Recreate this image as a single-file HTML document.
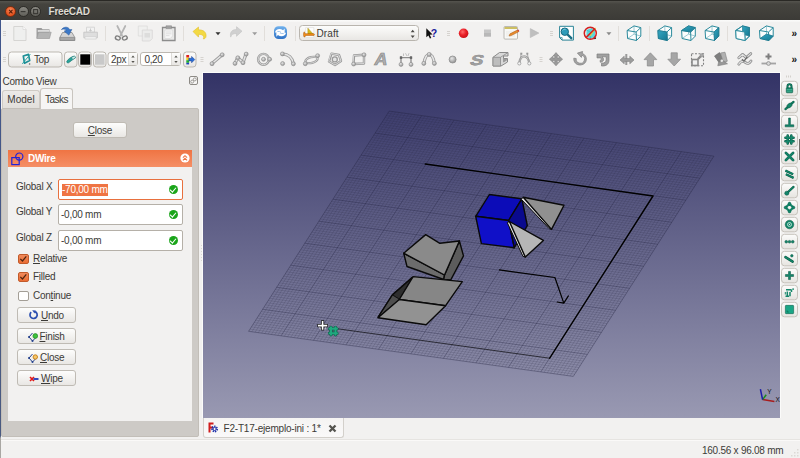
<!DOCTYPE html>
<html><head><meta charset="utf-8"><title>FreeCAD</title>
<style>
*{box-sizing:border-box;margin:0;padding:0}
html,body{width:800px;height:458px;overflow:hidden;background:#f2f1f0;font-family:"Liberation Sans",sans-serif;font-size:10px;letter-spacing:-.25px;line-height:12px;white-space:nowrap;color:#3c3b37}
.abs{position:absolute}
.tx{white-space:nowrap;line-height:12px}
.sel{background:#ef7443;color:#fff;display:inline-block;height:12px;line-height:12px;margin-left:1px}
#title{left:0;top:0;width:800px;height:20px;background:linear-gradient(#55544e 0,#45443f 3px,#3c3b37 100%);border-top:1px solid #2a2925}
#title .t{position:absolute;left:48.5px;top:5px;color:#dfdbd2;font-weight:bold;font-size:10px;letter-spacing:-.2px;text-shadow:0 1px 0 #222}
.wb{position:absolute;top:5px;width:11px;height:11px;border-radius:6px;border:1px solid #2e2d29;background:linear-gradient(#8a8983,#5f5e58)}
#edge{left:0;top:20px;width:1px;height:438px;background:linear-gradient(#41568c 0,#4a5a80 416px,#a9a7a3 418px)}
#view{left:202px;top:72px;width:579px;height:346px;border:1px solid #fbfbfa;border-bottom:0}
.gmin{stroke:#24243c;stroke-opacity:.3;stroke-width:.55;fill:none}
.gmaj{stroke:#20203a;stroke-opacity:.45;stroke-width:.8;fill:none}
/*PANEL*/
.tab{position:absolute;color:#3c3b37;text-align:center}
#tabpane{left:1px;top:108px;width:198px;height:329px;background:#cdcac6;border:1px solid #c2beb8;border-radius:2px}
#tp2{left:8px;top:150px;width:184px;height:271px;background:#f2f1f0}
.btn{position:absolute;border:1px solid #bfbbb4;border-radius:3px;background:linear-gradient(#fdfdfc,#e9e7e4);color:#3c3b37;text-align:center}
.inp{position:absolute;left:58px;width:125px;height:21px;background:#fff;border:1px solid #b5b0a8;border-radius:2px;padding:4px 0 0 2px}
.lbl{position:absolute;left:16px}
.ok{position:absolute;right:4px;top:5px;width:9px;height:9px;border-radius:5px;background:#1aa51a}
.ok:after{content:'';position:absolute;left:2.3px;top:1px;width:2.8px;height:4.8px;border:solid #fff;border-width:0 1.6px 1.6px 0;transform:rotate(40deg);transform-origin:50% 50%}
.cb{position:absolute;left:18px;width:10.5px;height:10px;border:1px solid #a39e96;border-radius:2px;background:#fff}
.cb.on{background:linear-gradient(#f08a5c,#ea6d33);border-color:#c25a2a}
.cbl{position:absolute;left:33px}
u{text-decoration-thickness:1px;text-underline-offset:1px}
</style></head><body>
<div id="title" class="abs">
 <div class="wb" style="left:5.3px;background:radial-gradient(circle at 50% 35%,#f58a5c,#e5511c 70%);border-color:#7b2d10"></div>
 <div class="wb" style="left:17.600px"></div>
 <div class="wb" style="left:30.100px"></div>
 <svg class="abs" style="left:0;top:0" width="48" height="20" viewBox="0 0 48 20"><path d="M9.100 8.900l3.400 3.400M12.500 8.900l-3.400 3.400" stroke="#5a1d08" stroke-width="1.100"/><path d="M20.700 10.600h4.800" stroke="#3a3935" stroke-width="1.200"/><rect x="33.600" y="8.600" width="4" height="4" fill="none" stroke="#3a3935" stroke-width="1.100"/></svg>
 <div class="t">FreeCAD</div>
</div>
<div class="abs" style="left:1px;top:20px;width:799px;height:2px;background:linear-gradient(#fbfbfa,#f6f5f4)"></div>
<div id="edge" class="abs"></div>

<!--TOOLBARS-->
<svg id="tb" class="abs" style="left:0;top:20px" width="800" height="52" viewBox="0 20 800 52">
<defs>
<linearGradient id="gb" x1="0" y1="0" x2="0" y2="1"><stop offset="0" stop-color="#fdfdfc"/><stop offset="1" stop-color="#e8e6e3"/></linearGradient>
<radialGradient id="rec" cx=".4" cy=".35" r=".7"><stop offset="0" stop-color="#ff6a6a"/><stop offset=".5" stop-color="#ea2028"/><stop offset="1" stop-color="#c41018"/></radialGradient>
<radialGradient id="sph" cx=".4" cy=".35" r=".7"><stop offset="0" stop-color="#e8e8e8"/><stop offset="1" stop-color="#8c8c8c"/></radialGradient>
<linearGradient id="teal" x1="0" y1="0" x2="1" y2="1"><stop offset="0" stop-color="#34a8c4"/><stop offset="1" stop-color="#157890"/></linearGradient>
<g id="hd" stroke="#d6d3cf" stroke-width="1"><path d="M0 .5h3M0 2.5h3M0 4.5h3"/></g>
<g id="cube" fill="#fbfdfd" stroke="#2b8a9c" stroke-width="1" stroke-linejoin="round">
<path d="M0.3 5L7.2 0.4L14 2.1L14 10.6L9.7 15L0.8 13Z"/>
<path d="M7.2 0.4L7.3 8.6L0.8 13M7.3 8.6L14 10.6" fill="none" stroke-width=".6" stroke-opacity=".75"/>
<path d="M0.3 5L9.3 6.5L14 2.1M9.3 6.5L9.7 15" fill="none"/>
</g>
<g id="sp"><circle r="2" fill="url(#sph)" stroke="#8e8e8e" stroke-width=".6"/></g>
</defs>
<!-- separators & handles -->
<g stroke="#e1deda" stroke-width="1"><path d="M105.5 26v15M183.5 26v15M264.5 26v15M295.5 26v15M618.5 26v15M649.5 26v15M727.5 26v15"/></g>
<use href="#hd" x="3" y="31"/><use href="#hd" x="3" y="57"/><use href="#hd" x="447" y="31"/><use href="#hd" x="550" y="31"/><use href="#hd" x="200.5" y="57"/><use href="#hd" x="539.5" y="57"/>
<!-- ROW 1 -->
<!-- new -->
<path d="M13.8 26.5h9.2l3 3v11h-12.2z" fill="#efefee" stroke="#d2d1cf" stroke-width=".9"/><path d="M23 26.5v3h3" fill="#fafafa" stroke="#d8d7d5" stroke-width=".7"/>
<!-- open -->
<path d="M36.5 28h5l1 1.2h7v9h-13z" fill="#9c9c9c"/><path d="M37.8 30h11.4v2h-11.4z" fill="#dcdcdc"/><path d="M38.5 32.2h12.7l-1.7 6.3h-12.7z" fill="#b4b4b4" stroke="#9a9a9a" stroke-width=".6"/>
<!-- save -->
<path d="M62.5 32.5h9.5l2.8 5v3h-15v-3z" fill="#d4d4d4" stroke="#8a8a8a" stroke-width=".8"/><path d="M60 37.4h14.6v3h-14.6z" fill="#a8a8a8" stroke="#808080" stroke-width=".6"/>
<path d="M61.5 29.5c2.5-3.2 7-3 8.3.3l2-.3l-3 5.6l-4.6-4l2-.5c-1-1.800-3-1.900-4.700-1.100z" fill="#3a78c8" stroke="#2558a0" stroke-width=".6"/>
<!-- print -->
<path d="M86.500 27.200h8v5h-8z" fill="#f2f2f2" stroke="#cfcfcf" stroke-width=".8"/><path d="M83.800 32.200h13.600v5.600h-13.600z" fill="#dedede" stroke="#c4c4c4" stroke-width=".8"/><path d="M85 36.500h11.200v2.600h-11.200z" fill="#efefef" stroke="#cccccc" stroke-width=".6"/><path d="M90.500 28.500v2.600M89.300 30l1.200 1.300l1.200-1.300" stroke="#c0c0c0" stroke-width=".8" fill="none"/>
<!-- cut -->
<path d="M117.300 26l4.800 9.500M125.300 26l-4.800 9.500" stroke="#b4b4b4" stroke-width="1.700" stroke-linecap="round"/>
<ellipse cx="117.800" cy="38" rx="2.500" ry="1.900" fill="none" stroke="#7e7e7e" stroke-width="1.400" transform="rotate(25 117.800 38)"/><ellipse cx="124.800" cy="38" rx="2.500" ry="1.900" fill="none" stroke="#7e7e7e" stroke-width="1.400" transform="rotate(-25 124.800 38)"/>
<!-- copy -->
<path d="M138.300 26h9v10h-9z" fill="#f0f0ef" stroke="#dddcda" stroke-width=".8"/><path d="M142.300 30h10v8.500l-2.500 2.500h-7.500z" fill="#ececeb" stroke="#d8d7d5" stroke-width=".8"/><path d="M144.500 33h5.500v4.500h-5.500z" fill="#dddddc"/>
<!-- paste -->
<path d="M162.500 27.500h12.500v13h-12.500z" fill="#e9e9e8" stroke="#8c8c8c" stroke-width="1.300"/><path d="M166 25.800h5.500v2.600h-5.500z" fill="#a4a4a4" stroke="#8a8a8a" stroke-width=".6"/><path d="M164.800 30h7.900v6l-2.500 2.500h-5.400z" fill="#f6f6f6" stroke="#cfcfcf" stroke-width=".5"/><path d="M166 32h5.500M166 33.800h5.500M166 35.600h3.500" stroke="#d4d4d4" stroke-width=".7"/>
<!-- undo -->
<path d="M193 31.500l5.500-4.500v2.800c5.500 0 8 2.800 7.500 6.800c-.3 1.600-1.300 2.300-2.800 2.300c1.200-1.600.6-4.600-4.700-4.600v2.800z" fill="#f3d944" stroke="#e2c02a" stroke-width=".6"/>
<path d="M215.500 32.300h5l-2.500 3z" fill="#333"/>
<!-- redo -->
<path d="M242 31.200l-5.500-4.500v2.800c-5 0-6.800 3.200-5.800 7.600c.8-2.600 2.300-3.600 5.800-3.600v2.800z" fill="#d0d0d0" stroke="#c2c2c2" stroke-width=".6"/>
<path d="M252.200 32.300h5l-2.500 3z" fill="#9c9c9c"/>
<!-- refresh -->
<linearGradient id="rf" x1="0" y1="0" x2="0" y2="1"><stop offset="0" stop-color="#6fb0ec"/><stop offset="1" stop-color="#2f72c6"/></linearGradient>
<rect x="274" y="26.200" width="13" height="12.800" rx="4.500" fill="url(#rf)"/>
<g transform="translate(280.500 32.600) scale(1.300) translate(-280.500 -32.600)"><path d="M276.300 32.500c.2-2.600 3.600-3.600 6.200-1.800l1.200-1.200v3.800h-3.800l1.200-1.200c-1.600-.9-3.200-.6-3.600.4z" fill="#fff"/><path d="M284.700 32.700c-.2 2.600-3.600 3.600-6.200 1.800l-1.200 1.200v-3.800h3.800l-1.200 1.200c1.600.9 3.200.6 3.600-.4z" fill="#fff"/></g>
<!-- combo -->
<rect x="299.500" y="25.500" width="119" height="15" rx="3" fill="url(#gb)" stroke="#b9b5ae"/>
<path d="M410.700 32.200l2-2.400l2 2.400zM410.700 35.600l2 2.400l2-2.400z" fill="#4a4945"/>
<path d="M305.600 27.600h8.200v9.700h-8.200z" fill="#fdfdfd" stroke="#d9d7d3" stroke-width=".5"/>
<path d="M307.900 28.200L313 33.900H307.900Z" fill="#e6c81e" stroke="#9c8610" stroke-width=".5"/><path d="M309 30.500v3M310.300 32v1.500" stroke="#9c8610" stroke-width=".4"/>
<path d="M305 33.700h8.900l.6.900l-.6.900h-8.300c-.3 1 -.8 1.500-1.500 1.500c-.8-1.200-.8-4 0-5.200c.6.200.9.900.9 1.900z" fill="#f08c1a" stroke="#aa5808" stroke-width=".5"/>
<!-- whats this -->
<path d="M426.300 28.300v9l2.100-1.900l1.500 3.200l1.400-.7l-1.500-3.100l2.800-.3z" fill="#111"/>
<text x="430.800" y="37.300" font-family="Liberation Sans,sans-serif" font-weight="bold" font-size="10.500" fill="#1a1a9c">?</text>
<!-- record / stop / edit / play -->
<circle cx="463.600" cy="33.300" r="4.800" fill="url(#rec)"/>
<rect x="484" y="29.500" width="7" height="7" fill="#c6c6c6"/><rect x="484" y="33" width="7" height="3.500" fill="#b8b8b8"/>
<rect x="504" y="26.500" width="13.500" height="12.600" rx="1" fill="#f8f8f6" stroke="#b4b2ac" stroke-width=".9"/><path d="M504.500 27h12.500v2h-12.500z" fill="#cdbf62"/><path d="M506 32h9M506 34h9M506 36h9" stroke="#e0dfdc" stroke-width=".6"/>
<path d="M509 36l1-2.200l7.400-3.800l1.200 1.800l-7.400 3.800z" fill="#e88a2c" stroke="#a85a14" stroke-width=".5"/><path d="M517.400 30l1.200 1.800l.8-.5l-1.100-1.800z" fill="#d03030"/>
<path d="M530.300 28.600l8.600 4.500l-8.600 4.500z" fill="#bfbfbf" stroke="#b0b0b0" stroke-width=".5"/>
<!-- zoom fit -->
<path d="M559.600 26.300h13.800v13.800h-11.300l-2.500-2.500z" fill="#fdfefe" stroke="#2a8496" stroke-width="1"/><path d="M559.600 37.600h2.500v2.500" fill="none" stroke="#2a8496" stroke-width=".8"/>
<path d="M567 34l4.300 4.200" stroke="#1a6e84" stroke-width="2.400" stroke-linecap="round"/><circle cx="564.800" cy="31.700" r="3.700" fill="#2e9cba" stroke="#176a80" stroke-width="1"/><path d="M562.600 30.600a2.400 2.400 0 0 1 3-1.300" stroke="#8fd4e6" stroke-width=".8" fill="none"/>
<!-- draw style -->
<path d="M586.500 30l5-2l3.500 2.500v6l-4.500 2.500l-4-2.500z" fill="#5cd6dc"/><path d="M586.500 30l4 2.200l4.500-1.700M590.500 32.200v6.800" stroke="#3ab0ba" stroke-width=".6" fill="none"/>
<path d="M594.200 36.500l2 1.300l-.4 1.200l-2.600.3z" fill="#333"/>
<path d="M589.500 35.500l5.500-8l1 .7l-5.500 8z" fill="#f0d030"/>
<circle cx="590.300" cy="33.300" r="6" fill="none" stroke="#d42020" stroke-width="1.500"/><path d="M594.600 29l-8.600 8.600" stroke="#d42020" stroke-width="1.500"/>
<path d="M606.400 32.300h5l-2.500 3z" fill="#8a8a8a"/>
<!-- cubes -->
<use href="#cube" x="626.8" y="25.5"/>
<use href="#cube" x="657.6" y="25.5"/><path d="M657.9 30.5L666.9 32L667.3 40.5L658.4 38.5Z" fill="url(#teal)" stroke="#1c7288" stroke-width=".6"/>
<use href="#cube" x="681.3" y="25.5"/><path d="M681.6 30.5L688.5 25.9L695.3 27.6L690.6 32Z" fill="url(#teal)" stroke="#1c7288" stroke-width=".6"/>
<use href="#cube" x="704.8" y="25.5"/><path d="M714.1 32L718.8 27.6L718.8 36.1L714.5 40.5Z" fill="url(#teal)" stroke="#1c7288" stroke-width=".6"/>
<use href="#cube" x="735.4" y="25.5"/><path d="M742.6 25.9L749.4 27.6L749.4 36.1L742.7 34.1Z" fill="url(#teal)" stroke="#1c7288" stroke-width=".6"/><path d="M735.7 30.5L744.7 32L745.1 40.5L736.2 38.5Z" fill="#fbfdfd" fill-opacity=".9" stroke="#2b8a9c" stroke-width=".9"/><path d="M735.7 30.5L742.6 25.9M744.7 32L749.4 27.6M745.1 40.5L749.4 36.1" fill="none" stroke="#2b8a9c" stroke-width=".9"/>
<use href="#cube" x="759.2" y="25.5"/><path d="M760 38.5L768.9 40.5L773.2 36.1L766.5 34.1Z" fill="url(#teal)" stroke="#1c7288" stroke-width=".6"/>
<text x="791.500" y="36.800" font-family="Liberation Sans,sans-serif" font-weight="bold" font-size="10" fill="#111">»</text>
<text x="791.500" y="63.200" font-family="Liberation Sans,sans-serif" font-weight="bold" font-size="10" fill="#111">»</text>
<!-- ROW 2 widgets -->
<rect x="8.500" y="52" width="53.500" height="15" rx="3" fill="url(#gb)" stroke="#bcb8b1"/>
<rect x="64.500" y="52" width="12.500" height="15" rx="3" fill="url(#gb)" stroke="#bcb8b1"/>
<rect x="78.500" y="52" width="13" height="15" rx="3" fill="url(#gb)" stroke="#bcb8b1"/><rect x="80.300" y="54.300" width="10" height="10.400" fill="#000"/>
<rect x="93.500" y="52" width="12.500" height="15" rx="3" fill="url(#gb)" stroke="#bcb8b1"/><rect x="95" y="54.300" width="9.500" height="10.400" fill="#c9c9c9"/>
<rect x="108" y="52.500" width="29.500" height="13" rx="2.500" fill="#fff" stroke="#bcb8b1"/><path d="M128.500 53h8.500v12h-8.500z" fill="url(#gb)"/><path d="M128.500 53v12" stroke="#d6d3ce" stroke-width=".8"/>
<rect x="140.500" y="52.500" width="40" height="13" rx="2.500" fill="#fff" stroke="#bcb8b1"/><path d="M171.500 53h8.500v12h-8.500z" fill="url(#gb)"/><path d="M171.500 53v12" stroke="#d6d3ce" stroke-width=".8"/>
<path d="M131.300 57.600l1.700-2l1.700 2zM131.300 61l1.700 2l1.700-2zM174.300 57.600l1.700-2l1.700 2zM174.300 61l1.700 2l1.700-2z" fill="#55544f"/>
<rect x="183.500" y="52" width="12.500" height="15" rx="3" fill="url(#gb)" stroke="#bcb8b1"/>
<!-- top icon -->
<path d="M23.300 56l5.200-1.600l1.200 6.200l-5.200 2.600z" fill="none" stroke="#1e8f96" stroke-width="1.700" stroke-linejoin="round"/><path d="M22.300 63.800l8-9.600" stroke="#2aa6a6" stroke-width="1"/><path d="M29.600 63.300v1.300M28.900 64h1.400" stroke="#444" stroke-width=".6"/>
<!-- pen icon -->
<path d="M66.800 61.300c1.700-2.600 4.200-4.400 7.600-5.300l1.200 1.700c-2.800 1.800-5.200 3.700-7 5.100c-1.100.4-2.200-.4-1.800-1.500z" fill="#2aa39a" stroke="#0f6f6a" stroke-width=".6"/><path d="M71.500 57.500l3.200-1.500l.9 1.500l-2.800 1.900z" fill="#d8f0ee" stroke="#0f6f6a" stroke-width=".4"/>
<!-- color arrow icon -->
<rect x="186.300" y="55" width="2.800" height="2.600" fill="#e02020"/><rect x="186.300" y="57.600" width="2.800" height="2.600" fill="#f0d020"/><rect x="186.300" y="60.200" width="2.800" height="2.600" fill="#20b030"/><rect x="186.300" y="62.800" width="2.800" height="1.600" fill="#2040c0"/>
<path d="M188.800 58.300h2.800v-1.900l3.200 3.200l-3.200 3.200v-1.900h-2.800z" fill="#2a6fd8" stroke="#1a3f90" stroke-width=".5"/>
<!-- ROW 2 gray icons -->
<g fill="none" stroke-linecap="round" stroke-linejoin="round">
 <g stroke="#9c9c9c" stroke-width="3.200">
  <path d="M212 63.500L222 55"/>
  <path d="M235 63.300L237.800 57.800L243 62.600L246 54.100"/>
  <path d="M282.500 53.900C288.500 54.200 292.500 58 293.300 63.600"/>
  <path d="M423.900 63.300C425 57 427 54.500 429.200 54.500C431.400 54.500 433.400 57 434.300 63.300"/>
 </g>
 <g stroke="#e6e6e6" stroke-width="1.500">
  <path d="M212 63.500L222 55"/>
  <path d="M235 63.300L237.800 57.800L243 62.600L246 54.100"/>
  <path d="M282.500 53.900C288.500 54.200 292.500 58 293.300 63.600"/>
  <path d="M423.900 63.300C425 57 427 54.500 429.200 54.500C431.400 54.500 433.400 57 434.300 63.300"/>
 </g>
 <!-- circle -->
 <circle cx="263.500" cy="59.300" r="5.400" stroke="#9a9a9a" stroke-width="2.400"/><circle cx="263.500" cy="59.300" r="5.400" stroke="#dcdcdc" stroke-width=".9"/>
 <!-- ellipse -->
 <ellipse cx="311.500" cy="60" rx="6.300" ry="2.900" transform="rotate(-14 311.500 60)" stroke="#9a9a9a" stroke-width="2.200"/><ellipse cx="311.500" cy="60" rx="6.300" ry="2.900" transform="rotate(-14 311.500 60)" stroke="#dcdcdc" stroke-width=".8"/>
 <!-- polygon -->
 <path d="M331.500 53.600L339 55L341 61L335 65L329 61.500Z" stroke="#9a9a9a" stroke-width="2.400"/><path d="M331.500 53.600L339 55L341 61L335 65L329 61.500Z" stroke="#dcdcdc" stroke-width=".9"/>
 <circle cx="334.800" cy="59.400" r="2.500" stroke="#9a9a9a" stroke-width="1.300" fill="#e4e4e4"/>
 <!-- rect -->
 <path d="M354 55.500L364 54.800L364 63.500L353.500 64Z" stroke="#9a9a9a" stroke-width="2.400"/><path d="M354 55.500L364 54.800L364 63.500L353.500 64Z" stroke="#dcdcdc" stroke-width=".9"/>
</g>
<g>
<use href="#sp" x="212" y="63.700"/><use href="#sp" x="222.200" y="54.800"/>
<use href="#sp" x="235" y="63.400"/><use href="#sp" x="237.800" y="57.800"/><use href="#sp" x="243" y="62.700"/><use href="#sp" x="246.200" y="54.100"/>
<use href="#sp" x="263.500" y="59.300"/><use href="#sp" x="269.600" y="59.300"/>
<use href="#sp" x="282.400" y="53.900"/><use href="#sp" x="293.400" y="63.800"/><use href="#sp" x="282.600" y="63.600"/>
<use href="#sp" x="317.600" y="55.700"/><use href="#sp" x="305.300" y="63.700"/>
<use href="#sp" x="364" y="54.800"/><use href="#sp" x="353.600" y="64"/>
<use href="#sp" x="423.800" y="63.400"/><use href="#sp" x="434.400" y="63.400"/><use href="#sp" x="429.200" y="54.400"/>
</g>
<!-- text A -->
<text transform="translate(374.500 65.300) scale(1.120 1)" font-family="Liberation Sans,sans-serif" font-style="italic" font-weight="bold" font-size="16" fill="#b0b0b0" stroke="#868686" stroke-width=".6">A</text>
<!-- dimension -->
<path d="M401 56v8M411 56v8" stroke="#8a8a8a" stroke-width="1.300"/><path d="M400 57.700h12" stroke="#777" stroke-width="1"/><path d="M403.500 53.500v2.500M405.500 53.200l1.500 2.800M409 53.200l-1 2.800" stroke="#a0a0a0" stroke-width=".6"/>
<use href="#sp" x="401" y="64.400"/><use href="#sp" x="411" y="64.400"/><rect x="399.800" y="56.500" width="2.400" height="2.400" fill="#666"/><rect x="409.800" y="56.500" width="2.400" height="2.400" fill="#666"/>
<!-- point -->
<circle cx="452.600" cy="59.500" r="3.500" fill="url(#sph)" stroke="#8e8e8e" stroke-width=".8"/>
<!-- S -->
<text transform="translate(469 65) scale(1.350 1) skewX(-14)" font-family="Liberation Sans,sans-serif" font-weight="bold" font-size="14.500" fill="#a2a2a2" stroke="#8a8a8a" stroke-width=".5">S</text>
<!-- facebinder -->
<path d="M493 57.300L499.500 52.500L508 52.500L508 56L503.500 56L503.500 58.500L507.500 58.500L507.500 62L501 66L493 66Z" fill="#d8d8d8" stroke="#8a8a8a" stroke-width="1" stroke-linejoin="round"/><path d="M493 57.300L500.500 57.300L500.500 66L493 66Z" fill="#bdbdbd" stroke="#8a8a8a" stroke-width=".8"/><path d="M500.500 57.300L508 52.500" stroke="#8a8a8a" stroke-width=".8"/><path d="M503.500 58.500v3.500l4-2.500" fill="#9c9c9c" stroke="#8a8a8a" stroke-width=".6"/>
<!-- bezier -->
<path d="M519.300 63.300C520.300 54 528 54 529.300 63.300" fill="none" stroke="#9a9a9a" stroke-width="2.200"/><path d="M519.300 63.300C520.300 54 528 54 529.300 63.300" fill="none" stroke="#dcdcdc" stroke-width=".8"/>
<path d="M519.300 63.300L521.300 53.500M529.300 63.300L527.300 53.500" stroke="#9a9a9a" stroke-width=".8"/>
<circle cx="519.300" cy="63.400" r="1.600" fill="#f4f4f4" stroke="#9a9a9a" stroke-width=".8"/><circle cx="529.300" cy="63.400" r="1.600" fill="#f4f4f4" stroke="#9a9a9a" stroke-width=".8"/><rect x="520.300" y="52.700" width="2" height="2" fill="#999"/><rect x="526.300" y="52.700" width="2" height="2" fill="#999"/>
<!-- move -->
<path d="M556 52.600l3 3.400h-1.800v2h2v-1.800l3.400 3l-3.400 3v-1.800h-2v2h1.800l-3 3.400l-3-3.400h1.800v-2h-2v1.800l-3.400-3l3.400-3v1.800h2v-2h-1.800z" fill="#9a9a9a" stroke="#808080" stroke-width=".6"/>
<!-- rotate -->
<path d="M576.200 58.500a4.200 4.200 0 1 0 5.600-3.400l-.4 2.300l-4-4.300l5.200-1.600l-.4 1.900c6 2 5.600 11-1.600 11.600c-4.400.2-7.200-3-6.800-6.800z" fill="#a4a4a4" stroke="#7e7e7e" stroke-width=".7"/>
<!-- offset -->
<path d="M597 54h12v6c0 4-2.500 6-6.500 6h-1v-2.800c3 0 4.700-1 4.700-3.700v-2.700h-4.200c2.600 1.600 2 5.600-1.800 5.400v-2c1.800 0 1.600-2.300-.4-2.300h-2.800z" fill="#a0a0a0" stroke="#7e7e7e" stroke-width=".7"/>
<!-- trimex -->
<path d="M626.300 54v11" stroke="#9a9a9a" stroke-width="2"/><path d="M620 60l4.200-3.800v2.400h5.600v-2.400l4.200 3.800l-4.200 3.800v-2.400h-5.600v2.400z" fill="#9c9c9c" stroke="#808080" stroke-width=".6"/>
<!-- upgrade / downgrade -->
<path d="M650.400 52.800l6.400 6.800h-3.300v6.400h-6.200v-6.400h-3.300z" fill="#a6a6a6" stroke="#8a8a8a" stroke-width=".7"/>
<path d="M674.200 66l6.400-6.800h-3.300v-6.400h-6.200v6.400h-3.300z" fill="#a6a6a6" stroke="#8a8a8a" stroke-width=".7"/>
<!-- scale -->
<rect x="691.500" y="53.800" width="12" height="12" fill="none" stroke="#808080" stroke-width="1.100" stroke-dasharray="2 1.500"/><rect x="692" y="59.500" width="6" height="6" fill="#f0f0f0" stroke="#8a8a8a" stroke-width="1.600"/><path d="M698.500 58.500l3-3" stroke="#8a8a8a" stroke-width="2.400" stroke-linecap="round"/><circle cx="701.800" cy="55.300" r="1.700" fill="#aaa" stroke="#888" stroke-width=".5"/>
<!-- edit -->
<path d="M714.500 56l5-3.400l4 7l-4.600 2.800z" fill="#7e7e7e" stroke="#6a6a6a" stroke-width=".6"/><path d="M720.500 53l4.500-.8l2.300 9l-4 1.500z" fill="#b0b0b0" stroke="#7e7e7e" stroke-width=".6"/><path d="M718.500 62.300l4.700-1.500l4.300 3l-9.700 2z" fill="#989898" stroke="#7e7e7e" stroke-width=".6"/><circle cx="721.800" cy="60.800" r="1.300" fill="#e8e8e8"/>
<!-- wire to bspline -->
<path d="M738.800 57.800l3.800-3.400l3.600 3.200l4.600-4" fill="none" stroke="#8e8e8e" stroke-width="2.800" stroke-linecap="round" stroke-linejoin="round"/><path d="M738.800 57.800l3.800-3.400l3.600 3.200l4.600-4" fill="none" stroke="#e2e2e2" stroke-width="1.200" stroke-linecap="round" stroke-linejoin="round"/>
<path d="M738.800 64.200c2.600-3.800 5-3 6.800-1.600c1.800 1.400 3.600 1 5.400-1.600" fill="none" stroke="#8e8e8e" stroke-width="2.800" stroke-linecap="round"/><path d="M738.800 64.200c2.600-3.800 5-3 6.800-1.600c1.800 1.400 3.600 1 5.400-1.600" fill="none" stroke="#e2e2e2" stroke-width="1.200" stroke-linecap="round"/>
<path d="M742 59.200l2 2l3.400-4.600" fill="none" stroke="#6e6e6e" stroke-width="1.400"/>
<!-- add point -->
<path d="M768.500 53.500v6M765.500 56.500h6" stroke="#7e7e7e" stroke-width="2"/><path d="M761.500 63.500h14.500" stroke="#a4a4a4" stroke-width="1.800"/><circle cx="768.500" cy="63.500" r="1.900" fill="#d8d8d8" stroke="#8a8a8a" stroke-width=".8"/>

</svg>
<div class="abs" style="left:316.500px;top:28px;font-size:10px;letter-spacing:.1px">Draft</div>
<div class="abs" style="left:34px;top:54px;letter-spacing:-.45px">Top</div>
<div class="abs" style="left:111px;top:53.500px">2px</div>
<div class="abs" style="left:144.500px;top:53.500px;letter-spacing:-.4px">0,20</div>


<!--VIEW-->
<div id="view" class="abs"><svg width="577" height="345" viewBox="203 73 577 345" style="display:block">
<defs><linearGradient id="bg" x1="0" y1="0" x2="0" y2="1"><stop offset="0" stop-color="#333366"/><stop offset="1" stop-color="#9999b2"/></linearGradient></defs>
<rect x="203" y="73" width="577" height="345" fill="url(#bg)"/>
<path class="gmin" d="M392.4 111.6L251.8 331.8M387.8 113.3L712.5 158.4M395.7 112.0L255.1 332.2M386.4 115.5L711.1 160.6M398.9 112.5L258.3 332.7M385.0 117.7L709.7 162.8M402.2 112.9L261.6 333.1M383.6 119.9L708.3 165.0M405.4 113.4L264.8 333.6M382.2 122.1L706.9 167.2M408.7 113.8L268.1 334.0M380.8 124.3L705.5 169.4M411.9 114.3L271.3 334.5M379.4 126.5L704.1 171.6M415.2 114.7L274.6 334.9M378.0 128.7L702.7 173.8M418.4 115.2L277.8 335.4M376.5 130.9L701.2 176.0M424.9 116.1L284.3 336.3M373.7 135.3L698.4 180.4M428.2 116.5L287.6 336.7M372.3 137.5L697.0 182.6M431.4 117.0L290.8 337.2M370.9 139.7L695.6 184.8M434.7 117.4L294.1 337.6M369.5 141.9L694.2 187.0M437.9 117.9L297.3 338.1M368.1 144.1L692.8 189.2M441.2 118.3L300.6 338.5M366.7 146.3L691.4 191.4M444.4 118.8L303.8 339.0M365.3 148.5L690.0 193.6M447.6 119.2L307.0 339.4M363.9 150.7L688.6 195.8M450.9 119.7L310.3 339.9M362.5 152.9L687.2 198.0M457.4 120.6L316.8 340.8M359.7 157.3L684.4 202.4M460.6 121.0L320.0 341.2M358.3 159.5L683.0 204.6M463.9 121.5L323.3 341.7M356.9 161.7L681.6 206.8M467.1 121.9L326.5 342.1M355.5 163.9L680.2 209.0M470.4 122.4L329.8 342.6M354.1 166.1L678.8 211.2M473.6 122.8L333.0 343.0M352.6 168.4L677.3 213.5M476.9 123.3L336.3 343.5M351.2 170.6L675.9 215.7M480.1 123.7L339.5 343.9M349.8 172.8L674.5 217.9M483.4 124.2L342.8 344.4M348.4 175.0L673.1 220.1M489.9 125.1L349.3 345.3M345.6 179.4L670.3 224.5M493.1 125.5L352.5 345.7M344.2 181.6L668.9 226.7M496.4 126.0L355.8 346.2M342.8 183.8L667.5 228.9M499.6 126.4L359.0 346.6M341.4 186.0L666.1 231.1M502.8 126.9L362.2 347.1M340.0 188.2L664.7 233.3M506.1 127.3L365.5 347.5M338.6 190.4L663.3 235.5M509.3 127.8L368.7 348.0M337.2 192.6L661.9 237.7M512.6 128.2L372.0 348.4M335.8 194.8L660.5 239.9M515.8 128.7L375.2 348.9M334.4 197.0L659.1 242.1M522.3 129.6L381.7 349.8M331.6 201.4L656.3 246.5M525.6 130.0L385.0 350.2M330.1 203.6L654.8 248.7M528.8 130.5L388.2 350.7M328.7 205.8L653.4 250.9M532.1 130.9L391.5 351.1M327.3 208.0L652.0 253.1M535.3 131.4L394.7 351.6M325.9 210.2L650.6 255.3M538.6 131.8L398.0 352.0M324.5 212.4L649.2 257.5M541.8 132.3L401.2 352.5M323.1 214.6L647.8 259.7M545.1 132.7L404.5 352.9M321.7 216.8L646.4 261.9M548.3 133.2L407.7 353.4M320.3 219.0L645.0 264.1M554.8 134.1L414.2 354.3M317.5 223.4L642.2 268.5M558.0 134.6L417.4 354.8M316.1 225.6L640.8 270.7M561.3 135.0L420.7 355.2M314.7 227.8L639.4 272.9M564.5 135.5L423.9 355.7M313.3 230.0L638.0 275.1M567.8 135.9L427.2 356.1M311.9 232.2L636.6 277.3M571.0 136.4L430.4 356.6M310.5 234.4L635.2 279.5M574.3 136.8L433.7 357.0M309.1 236.6L633.8 281.7M577.5 137.3L436.9 357.5M307.7 238.8L632.4 283.9M580.8 137.7L440.2 357.9M306.2 241.0L630.9 286.1M587.3 138.6L446.7 358.8M303.4 245.4L628.1 290.5M590.5 139.1L449.9 359.3M302.0 247.6L626.7 292.7M593.8 139.5L453.2 359.7M300.6 249.8L625.3 294.9M597.0 140.0L456.4 360.2M299.2 252.0L623.9 297.1M600.3 140.4L459.7 360.6M297.8 254.2L622.5 299.3M603.5 140.9L462.9 361.1M296.4 256.4L621.1 301.5M606.7 141.3L466.1 361.5M295.0 258.6L619.7 303.7M610.0 141.8L469.4 362.0M293.6 260.8L618.3 305.9M613.2 142.2L472.6 362.4M292.2 263.0L616.9 308.1M619.7 143.1L479.1 363.3M289.4 267.4L614.1 312.5M623.0 143.6L482.4 363.8M288.0 269.6L612.7 314.7M626.2 144.0L485.6 364.2M286.6 271.8L611.3 316.9M629.5 144.5L488.9 364.7M285.2 274.0L609.9 319.1M632.7 144.9L492.1 365.1M283.8 276.2L608.4 321.4M636.0 145.4L495.4 365.6M282.3 278.5L607.0 323.6M639.2 145.8L498.6 366.0M280.9 280.7L605.6 325.8M642.5 146.3L501.9 366.5M279.5 282.9L604.2 328.0M645.7 146.7L505.1 366.9M278.1 285.1L602.8 330.2M652.2 147.6L511.6 367.8M275.3 289.5L600.0 334.6M655.5 148.1L514.9 368.3M273.9 291.7L598.6 336.8M658.7 148.5L518.1 368.7M272.5 293.9L597.2 339.0M661.9 149.0L521.3 369.2M271.1 296.1L595.8 341.2M665.2 149.4L524.6 369.6M269.7 298.3L594.4 343.4M668.4 149.9L527.8 370.1M268.3 300.5L593.0 345.6M671.7 150.3L531.1 370.5M266.9 302.7L591.6 347.8M674.9 150.8L534.3 371.0M265.5 304.9L590.2 350.0M678.2 151.2L537.6 371.4M264.1 307.1L588.8 352.2M684.7 152.1L544.1 372.3M261.3 311.5L586.0 356.6M687.9 152.6L547.3 372.8M259.8 313.7L584.5 358.8M691.2 153.0L550.6 373.2M258.4 315.9L583.1 361.0M694.4 153.5L553.8 373.7M257.0 318.1L581.7 363.2M697.7 153.9L557.1 374.1M255.6 320.3L580.3 365.4M700.9 154.4L560.3 374.6M254.2 322.5L578.9 367.6M704.2 154.8L563.6 375.0M252.8 324.7L577.5 369.8M707.4 155.3L566.8 375.5M251.4 326.9L576.1 372.0M710.7 155.7L570.1 375.9M250.0 329.1L574.7 374.2"/>
<path class="gmaj" d="M389.2 111.1L248.6 331.3M389.2 111.1L713.9 156.2M421.7 115.6L281.1 335.8M375.1 133.1L699.8 178.2M454.1 120.1L313.5 340.3M361.1 155.1L685.8 200.2M486.6 124.6L346.0 344.8M347.0 177.2L671.7 222.3M519.1 129.1L378.5 349.3M333.0 199.2L657.7 244.3M551.5 133.6L410.9 353.8M318.9 221.2L643.6 266.3M584.0 138.2L443.4 358.4M304.8 243.2L629.5 288.3M616.5 142.7L475.9 362.9M290.8 265.2L615.5 310.3M649.0 147.2L508.4 367.4M276.7 287.3L601.4 332.4M681.4 151.7L540.8 371.9M262.7 309.3L587.4 354.4M713.9 156.2L573.3 376.4M248.6 331.3L573.3 376.4"/>

<g stroke="#000" stroke-linejoin="round" stroke-linecap="round" fill="none">
<!-- wire -->
<path d="M425.2 164L653 196L549.7 358.2" stroke-width="1.4"/>
<path d="M549.7 358.2L338 328.800" stroke-width=".75" stroke-opacity=".85"/>
<path d="M499.4 269.9L554.9 277.5L563.8 303.1M568.4 295.9L563.8 303.1L557.2 302" stroke-width="1.2"/>
</g>
<g stroke="#0a0a0a" stroke-width="1.400" stroke-linejoin="round">
<!-- cube -->
<path d="M489.4 194.5L521.9 198.8L508.6 220.5L475.7 216.3Z" fill="#0c0cb8"/>
<path d="M475.7 216.3L508.6 220.5L514.3 247.7L481.4 243.6Z" fill="#1010c8"/>
<path d="M508.6 220.5L521.9 198.8L527.3 225.5L514.3 247.7Z" fill="#0a0a8e"/>
<!-- upper triangle -->
<path d="M521.300 199.300L523.400 197L551.700 229.500L549.200 228.600Z" fill="#e0e0e0" stroke-width="1"/>
<path d="M523.2 197.2L564 205.3L551.5 229.4Z" fill="#909090"/>
<!-- lower triangle -->
<path d="M507.300 222.700L509.600 221.400L525.500 257.200L523 256.400Z" fill="#e4e4e4" stroke-width="1"/>
<path d="M509.4 221.5L543.4 240.4L525.3 257.1Z" fill="#b6b6b6"/>
<!-- upper gray wedge -->
<path d="M403.7 253.2L444.5 275L443.8 279.5L407 266.5Z" fill="#6c6c6c"/>
<path d="M444.5 275L459.4 241L463.5 255.9L450.7 280L443.8 279.5Z" fill="#5c5c5c"/>
<path d="M403.7 253.2L425.7 234.6L439.9 243.3L459.4 241L444.5 275Z" fill="#8a8a8a"/>
<!-- lower folded sheet -->
<path d="M412.6 277.1L392.3 294.9L399.5 299.3Z" fill="#2e2e2e" stroke-width=".8"/>
<path d="M392.3 294.9L377.9 317.4L399.5 299.3Z" fill="#4e4e4e" stroke-width=".8"/>
<path d="M412.6 277.1L392.3 294.9L377.9 317.4" fill="none"/>
<path d="M413.1 276.6L462.3 281.6L445.6 305.7L399.3 299.5Z" fill="#868686"/>
<path d="M399.3 299.5L445.6 305.7L426.1 324.7L378 317.8Z" fill="#929292"/>
</g>
<!-- cursor -->
<g>
<path d="M329.500 328.800h7.500M329.500 333.200h7.500M331 327.300v7.500M335.500 327.300v7.500" stroke="#0e5c48" stroke-width="3.200" stroke-linecap="round" fill="none"/>
<path d="M329.500 328.800h7.500M329.500 333.200h7.500M331 327.300v7.500M335.500 327.300v7.500" stroke="#20a87e" stroke-width="2.100" stroke-linecap="round" fill="none"/>
<path d="M322.600 320.300v10.200M317.300 325.600h10.600" stroke="#1c1c1c" stroke-width="3.200"/>
<path d="M322.600 321v8.800M318 325.600h9.200" stroke="#fff" stroke-width="1.600"/>
<path d="M319.500 327.500l1 2M325.500 327.500l-.6 2" stroke="#e8e8e8" stroke-width=".8"/>
</g>
<!-- axis -->
<g stroke-width="1.500" fill="none">
<path d="M762.600 399.600L774.400 401.600" stroke="#a81c1c"/>
<path d="M762.600 399.600L766.200 394.700" stroke="#1c8a1c"/>
<path d="M762.600 399.600L760.400 389.200" stroke="#1c1ca8"/>
</g>
<text x="767.300" y="394.300" font-family="Liberation Sans,sans-serif" font-size="6.500" fill="#111">Y</text>
<text x="775.500" y="402.300" font-family="Liberation Sans,sans-serif" font-size="6.500" fill="#111">X</text>

</svg></div>

<div class="abs tx" style="left:2.500px;top:76px">Combo View</div>
<svg class="abs" style="left:189px;top:76px" width="9" height="9" viewBox="0 0 9 9"><rect x=".5" y=".5" width="8" height="8" rx="1.5" fill="#f7f6f5" stroke="#8d8a85"/><circle cx="3.2" cy="5.6" r="1.5" fill="none" stroke="#8d8a85" stroke-width=".8"/><circle cx="5.8" cy="3.4" r="1.5" fill="none" stroke="#8d8a85" stroke-width=".8"/></svg>
<div id="tabpane" class="abs"></div>
<div class="abs tab" style="left:2px;top:90px;width:38px;height:18px;background:linear-gradient(#eceae7,#e2dfdb);border:1px solid #cfcbc5;border-bottom:0;border-radius:3px 3px 0 0;padding-top:3px;letter-spacing:.05px">Model</div>
<div class="abs tab" style="left:40px;top:88px;width:33px;height:21px;background:#f6f5f4;border:1px solid #c9c5bf;border-bottom:0;border-radius:3px 3px 0 0;padding-top:4.500px;letter-spacing:-.5px">Tasks</div>
<div class="btn" style="left:73px;top:122px;width:54px;height:16px;padding-top:1.500px"><u>C</u>lose</div>
<div id="tp2" class="abs"></div>
<div class="abs" style="left:8px;top:150px;width:184px;height:17px;background:linear-gradient(#ef7443,#f58f66)"></div>
<svg class="abs" style="left:10px;top:151px" width="16" height="16" viewBox="0 0 16 16"><circle cx="9.3" cy="5.6" r="3.6" fill="none" stroke="#2222d8" stroke-width="1.2"/><rect x="1.8" y="6.6" width="7.4" height="7" fill="none" stroke="#2222d8" stroke-width="1.2"/></svg>
<div class="abs tx" style="left:28px;top:153px;color:#fff;font-weight:bold">DWire</div>
<svg class="abs" style="left:180px;top:153px" width="10" height="10" viewBox="0 0 10 10"><circle cx="5" cy="5" r="4.6" fill="#fff"/><path d="M2.9 4.7L5 2.7L7.1 4.7M2.9 7.3L5 5.3L7.1 7.3" fill="none" stroke="#ef7443" stroke-width="1.1"/></svg>

<div class="lbl tx" style="top:181px">Global X</div>
<div class="inp" style="top:179px;border-color:#e8703e"><span class="sel">-70,00 mm</span><i class="ok"></i></div>
<div class="lbl tx" style="top:206px">Global Y</div>
<div class="inp" style="top:204px">-0,00 mm<i class="ok"></i></div>
<div class="lbl tx" style="top:232px">Global Z</div>
<div class="inp" style="top:230px">-0,00 mm<i class="ok"></i></div>

<div class="cb on" style="top:254px"></div><div class="cbl tx" style="top:253px"><u>R</u>elative</div>
<div class="cb on" style="top:272px"></div><div class="cbl tx" style="top:271px">F<u>i</u>lled</div>
<div class="cb" style="top:291px"></div><div class="cbl tx" style="top:290px">Con<u>t</u>inue</div>
<svg class="abs" style="left:18px;top:254px" width="11" height="30" viewBox="0 0 11 30"><path d="M2.300 4.800l2.200 2.200L8.300 2.400M2.300 22.800l2.200 2.200L8.300 20.400" fill="none" stroke="#4e2410" stroke-width="1.200"/></svg>

<div class="btn" style="left:17px;top:307px;width:59px;height:16px"></div>
<div class="btn" style="left:17px;top:328px;width:59px;height:16px"></div>
<div class="btn" style="left:17px;top:349px;width:59px;height:16px"></div>
<div class="btn" style="left:17px;top:370px;width:59px;height:16px"></div>
<div class="abs tx" style="left:41px;top:310px"><u>U</u>ndo</div>
<div class="abs tx" style="left:39.5px;top:331px"><u>F</u>inish</div>
<div class="abs tx" style="left:40px;top:352px"><u>C</u>lose</div>
<div class="abs tx" style="left:41px;top:373px"><u>W</u>ipe</div>
<svg class="abs" style="left:26px;top:308px" width="14" height="80" viewBox="26 307 14 80">
<path d="M31.2 311.2a3.6 3.6 0 1 0 3.8-.6" fill="none" stroke="#2c4fb0" stroke-width="1.7"/><path d="M32.2 309.2l3.6.4-1.3 3z" fill="#2c4fb0"/>
<path d="M32.5 332l-3.5 4l3.5 4l3.5-3.6" fill="none" stroke="#23408c" stroke-width="1"/><circle cx="35.3" cy="335" r="2.4" fill="#3cc23c" stroke="#1b7a1b" stroke-width=".6"/><circle cx="29" cy="336" r="1" fill="#23408c"/><circle cx="32.5" cy="340" r="1" fill="#23408c"/>
<path d="M32.5 353l-3.5 4l3.5 4l3.5-3.6" fill="none" stroke="#23408c" stroke-width="1"/><circle cx="35.3" cy="356" r="2.2" fill="#f5c76a" stroke="#c47a12" stroke-width=".9"/><circle cx="29" cy="357" r="1" fill="#23408c"/><circle cx="32.5" cy="361" r="1" fill="#23408c"/>
<path d="M30 376l4 4M34 376l-4 4" stroke="#e01818" stroke-width="1.6"/><path d="M33.5 378h5" stroke="#2036b8" stroke-width="1.8"/>
</svg>

<div class="abs" style="left:203px;top:418px;width:141px;height:20px;background:linear-gradient(#f5f4f3,#faf9f9);border:1px solid #d3d0cb;border-top:0;border-radius:0 0 3px 3px"></div>
<svg class="abs" style="left:207px;top:421px" width="12" height="13" viewBox="0 0 12 13"><path d="M1.5 1.5h5v2h-3v2h2.5v2h-2.5v4h-2z" fill="#d01c1c"/><circle cx="7.6" cy="8" r="2.6" fill="none" stroke="#1c2fa8" stroke-width="1.6" stroke-dasharray="1.4 .9"/><circle cx="7.6" cy="8" r="1.6" fill="none" stroke="#1c2fa8" stroke-width="1"/></svg>
<div class="abs tx" style="left:223.5px;top:423px;letter-spacing:-.2px">F2-T17-ejemplo-ini : 1*</div>
<svg class="abs" style="left:328px;top:424px" width="9" height="9" viewBox="0 0 9 9"><path d="M1.5 1.5l6 6M7.5 1.5l-6 6" stroke="#55544f" stroke-width="2.3"/></svg>
<div class="abs" style="left:1px;top:440px;width:799px;height:1px;background:#faf9f8"></div><div class="abs" style="left:1px;top:439px;width:799px;height:1px;background:#e6e4e1"></div>
<div class="abs tx" style="left:702px;top:444.500px">160.56 x 96.08 mm</div>
<svg class="abs" style="left:788px;top:446px" width="12" height="12" viewBox="0 0 12 12"><!--grip--><g fill="#dcd9d5"><rect x="9" y="3" width="1.500" height="1.500"/><rect x="6" y="6" width="1.500" height="1.500"/><rect x="9" y="6" width="1.500" height="1.500"/><rect x="3" y="9" width="1.500" height="1.500"/><rect x="6" y="9" width="1.500" height="1.500"/><rect x="9" y="9" width="1.500" height="1.500"/></g></svg>
<svg class="abs" style="left:200px;top:244px" width="3" height="20" viewBox="0 0 3 20"><!--splitter--><g fill="#d9d6d2"><rect x="1" y="1" width="1" height="1"/><rect x="1" y="4" width="1" height="1"/><rect x="1" y="7" width="1" height="1"/><rect x="1" y="10" width="1" height="1"/><rect x="1" y="13" width="1" height="1"/><rect x="1" y="16" width="1" height="1"/></g></svg>

<svg class="abs" style="left:780px;top:72px" width="20" height="250" viewBox="780 72 20 250">
<defs><linearGradient id="sb" x1="0" y1="0" x2="0" y2="1"><stop offset="0" stop-color="#fcfcfb"/><stop offset="1" stop-color="#e6e4e0"/></linearGradient></defs>
<path d="M786.500 75.500v2M788.500 75.500v2M790.500 75.500v2" stroke="#d4d1cc" stroke-width="1"/>
<rect x="781.500" y="81.3" width="16" height="14.500" rx="3" fill="url(#sb)" stroke="#c6c2bb"/><g transform="translate(789.5 88.5) scale(.9) translate(-789.5 -88.5)"><path d="M787.3 88.0v-2a2.200 2.200 0 0 1 4.400 0v2" fill="none" stroke="#0a5a44" stroke-width="2.200"/><path d="M787.3 88.0v-2a2.200 2.200 0 0 1 4.400 0v2" fill="none" stroke="#14866a" stroke-width="1.100"/><rect x="785.9" y="87.7" width="7.200" height="5.600" rx=".8" fill="#14866a" stroke="#0a5a44" stroke-width=".6"/><path d="M786.5 89.7h6M786.5 91.5h6" stroke="#7fe0c0" stroke-width=".5"/></g>
<rect x="781.500" y="98.3" width="16" height="14.500" rx="3" fill="url(#sb)" stroke="#c6c2bb"/><g transform="translate(789.5 105.5) scale(.9) translate(-789.5 -105.5)"><path d="M785.0 109.5L794.0 101.5" stroke="#0a5a44" stroke-width="2.400" stroke-linecap="round"/><path d="M785.0 109.5L794.0 101.5" stroke="#14866a" stroke-width="1.300" stroke-linecap="round"/><ellipse cx="789.5" cy="105.5" rx="3.200" ry="2.200" transform="rotate(-40 789.5 105.5)" fill="#14866a" stroke="#0a5a44" stroke-width=".6"/></g>
<rect x="781.500" y="115.3" width="16" height="14.500" rx="3" fill="url(#sb)" stroke="#c6c2bb"/><g transform="translate(789.5 122.5) scale(.9) translate(-789.5 -122.5)"><path d="M788.5 117.5h2v7.600h3.800v2.200h-9.600v-2.200h3.800z" fill="#14866a" stroke="#0a5a44" stroke-width=".6"/></g>
<rect x="781.500" y="132.3" width="16" height="14.500" rx="3" fill="url(#sb)" stroke="#c6c2bb"/><g transform="translate(789.5 139.5) scale(.9) translate(-789.5 -139.5)"><path d="M785.0 137.5h9M785.0 141.5h9M787.5 135.0v9M791.5 135.0v9" stroke="#0a5a44" stroke-width="2.800" stroke-linecap="round"/><path d="M785.0 137.5h9M785.0 141.5h9M787.5 135.0v9M791.5 135.0v9" stroke="#14866a" stroke-width="1.700" stroke-linecap="round"/></g>
<rect x="781.500" y="149.3" width="16" height="14.500" rx="3" fill="url(#sb)" stroke="#c6c2bb"/><g transform="translate(789.5 156.5) scale(.9) translate(-789.5 -156.5)"><path d="M785.5 152.5l8 8M793.5 152.5l-8 8" stroke="#0a5a44" stroke-width="3" stroke-linecap="round"/><path d="M785.5 152.5l8 8M793.5 152.5l-8 8" stroke="#14866a" stroke-width="1.900" stroke-linecap="round"/></g>
<rect x="781.500" y="166.3" width="16" height="14.500" rx="3" fill="url(#sb)" stroke="#c6c2bb"/><g transform="translate(789.5 173.5) scale(.9) translate(-789.5 -173.5)"><path d="M785.0 170.3l8.500 4M785.5 174.3l8.500 4" stroke="#0a5a44" stroke-width="2.600"/><path d="M785.0 170.3l8.500 4M785.5 174.3l8.500 4" stroke="#14866a" stroke-width="1.500"/></g>
<rect x="781.500" y="183.3" width="16" height="14.500" rx="3" fill="url(#sb)" stroke="#c6c2bb"/><g transform="translate(789.5 190.5) scale(.9) translate(-789.5 -190.5)"><path d="M786.5 193.5L794.0 186.5" stroke="#0a5a44" stroke-width="2.400" stroke-linecap="round"/><path d="M786.5 193.5L794.0 186.5" stroke="#14866a" stroke-width="1.300" stroke-linecap="round"/><circle cx="786.5" cy="193.5" r="2.300" fill="#14866a" stroke="#0a5a44" stroke-width=".6"/></g>
<rect x="781.500" y="200.3" width="16" height="14.500" rx="3" fill="url(#sb)" stroke="#c6c2bb"/><path d="M789.5 203.7L793.3 207.5L789.5 211.3L785.7 207.5Z" fill="#f4f3f1" stroke="#14866a" stroke-width="2.200" stroke-linejoin="round"/><circle cx="789.5" cy="203.6" r="1.500" fill="#14866a" stroke="#0a5a44" stroke-width=".4"/><circle cx="793.4" cy="207.5" r="1.500" fill="#14866a" stroke="#0a5a44" stroke-width=".4"/><circle cx="789.5" cy="211.4" r="1.500" fill="#14866a" stroke="#0a5a44" stroke-width=".4"/><circle cx="785.6" cy="207.5" r="1.500" fill="#14866a" stroke="#0a5a44" stroke-width=".4"/>
<rect x="781.500" y="217.3" width="16" height="14.500" rx="3" fill="url(#sb)" stroke="#c6c2bb"/><circle cx="789.5" cy="224.5" r="4.300" fill="#14866a" stroke="#0a5a44" stroke-width=".5"/><circle cx="789.5" cy="224.5" r="2" fill="none" stroke="#d8efe6" stroke-width=".8"/><circle cx="789.5" cy="224.5" r=".7" fill="#d8efe6"/>
<rect x="781.500" y="234.3" width="16" height="14.500" rx="3" fill="url(#sb)" stroke="#c6c2bb"/><g transform="translate(789.5 241.5) scale(.9) translate(-789.5 -241.5)"><circle cx="785.9" cy="241.8" r="1.500" fill="#14866a" stroke="#0a5a44" stroke-width=".6"/><circle cx="789.5" cy="241.8" r="1.500" fill="#14866a" stroke="#0a5a44" stroke-width=".6"/><circle cx="793.1" cy="241.8" r="1.500" fill="#14866a" stroke="#0a5a44" stroke-width=".6"/></g>
<rect x="781.500" y="251.3" width="16" height="14.500" rx="3" fill="url(#sb)" stroke="#c6c2bb"/><g transform="translate(789.5 258.5) scale(.9) translate(-789.5 -258.5)"><path d="M785.0 257.0l8 5" stroke="#0a5a44" stroke-width="2.800" stroke-linecap="round"/><path d="M785.0 257.0l8 5" stroke="#14866a" stroke-width="1.700" stroke-linecap="round"/><circle cx="792.1" cy="255.5" r="1.400" fill="#14866a" stroke="#0a5a44" stroke-width=".6"/></g>
<rect x="781.500" y="268.3" width="16" height="14.500" rx="3" fill="url(#sb)" stroke="#c6c2bb"/><g transform="translate(789.5 275.5) scale(.9) translate(-789.5 -275.5)"><path d="M788.4 271.0h2.200v3.400h3.400v2.200h-3.400v3.400h-2.200v-3.400h-3.400v-2.200h3.400z" fill="#14866a" stroke="#0a5a44" stroke-width=".6"/></g>
<rect x="781.500" y="285.3" width="16" height="14.500" rx="3" fill="url(#sb)" stroke="#c6c2bb"/><path d="M786.0 289.7h5.500M791.5 289.7v2.200M787.3 291.5v5M785.5 296.3h3.600M790.0 292.0v4.300" fill="none" stroke="#14866a" stroke-width="1.500"/><circle cx="793.1" cy="289.1" r=".9" fill="#14866a"/><path d="M785.3 292.0v2.500" stroke="#14866a" stroke-width="1"/>
<rect x="781.500" y="302.3" width="16" height="14.500" rx="3" fill="url(#sb)" stroke="#c6c2bb"/><g transform="translate(789.5 309.5) scale(.9) translate(-789.5 -309.5)"><rect x="784.9" y="304.9" width="9.200" height="9.200" rx=".8" fill="#1aa686" stroke="#0a5a44" stroke-width=".6"/><path d="M786.9 310.5v1.800h1.800" fill="none" stroke="#0a5a44" stroke-width=".6"/></g>
<rect x="799" y="139" width="1" height="21" fill="#6e6d68"/>
</svg>

</body></html>
